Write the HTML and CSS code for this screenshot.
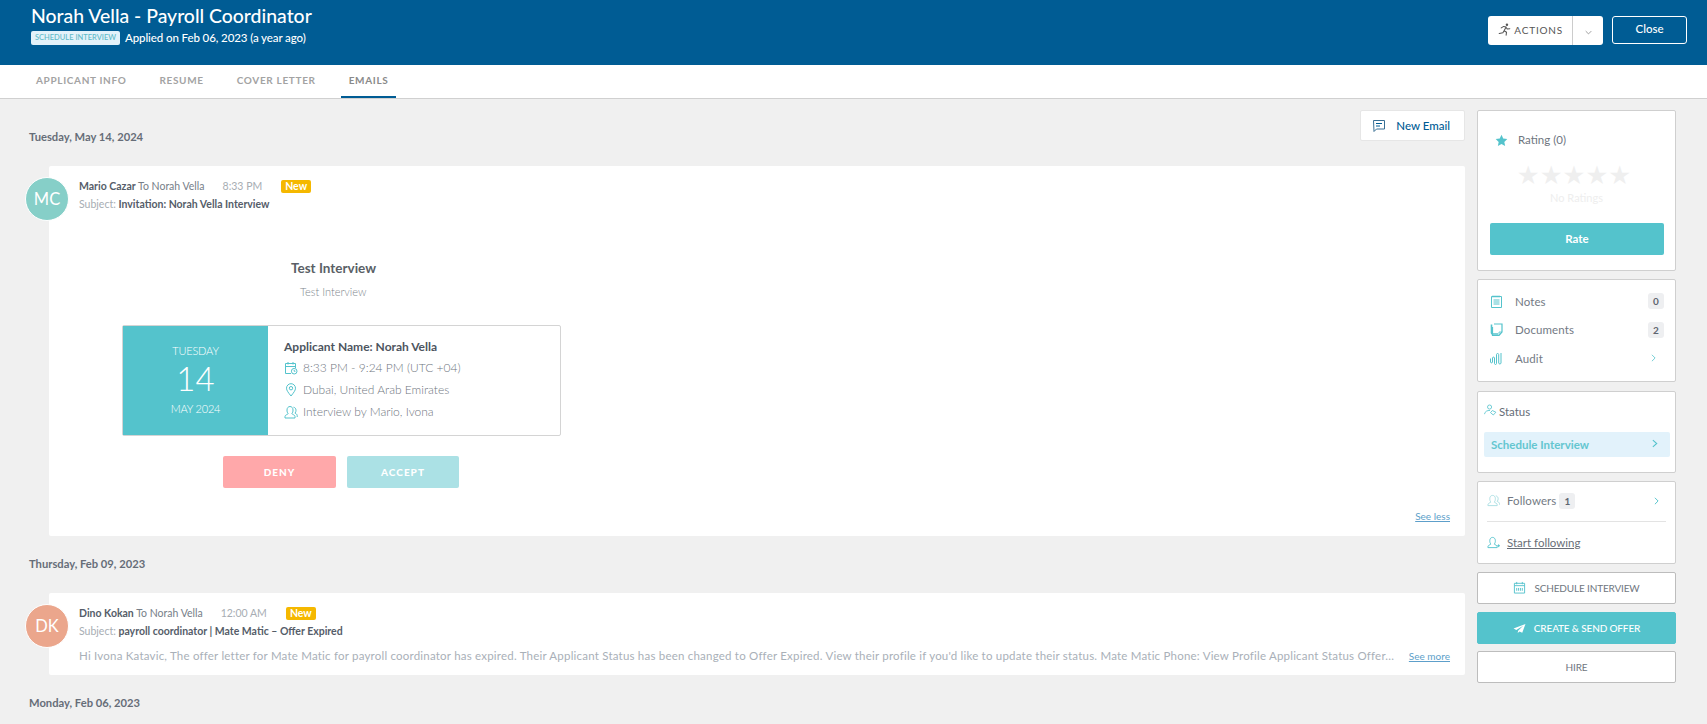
FILE: index.html
```html
<!DOCTYPE html>
<html lang="en">
<head>
<meta charset="utf-8">
<title>Norah Vella - Payroll Coordinator</title>
<link rel="stylesheet" href="styles.css">
</head>
<body>
<header class="topbar">
  <div class="topbar-text">
    <h1 class="title">Norah Vella - Payroll Coordinator</h1>
    <div class="subtitle"><span class="status-tag">SCHEDULE INTERVIEW</span><span>Applied on Feb 06, 2023 (a year ago)</span></div>
  </div>
  <div class="topbar-actions">
    <div class="actions-btn">
      <span class="actions-main">
        <svg class="ic-run" viewBox="0 0 16 16" fill="none" stroke="#555" stroke-width="1.300" stroke-linecap="round" stroke-linejoin="round"><circle cx="11" cy="2.200" r="1.500" fill="#555" stroke="none"/><path d="M4 6 7 4.200l3 .8-2.500 4.500 3 1.800-.5 3.700M7.500 9.500 6 12 1.500 13M10 5.500l1.500 2 3-.5"/></svg>
        ACTIONS
      </span>
      <span class="actions-caret"><svg viewBox="0 0 10 6" fill="none" stroke="#777" stroke-width="1"><path d="M1 1l4 4 4-4"/></svg></span>
    </div>
    <button class="close-btn">Close</button>
  </div>
</header>
<nav class="tabs">
  <a class="tab">APPLICANT INFO</a>
  <a class="tab">RESUME</a>
  <a class="tab">COVER LETTER</a>
  <a class="tab active">EMAILS</a>
</nav>
<main class="layout">
  <section class="emails">
    <div class="first-row">
      <div class="date">Tuesday, May 14, 2024</div>
      <button class="new-email">
        <svg class="ic-chat" viewBox="0 0 14 14" fill="none" stroke="#005c94" stroke-width="1"><path d="M1.500 1.500h11v8.500h-8l-2.500 2.500z" stroke="#3a6f94"/><path d="M4 4.500h6M4 7h4"/></svg>
        New Email
      </button>
    </div>
    <article class="email-card open">
      <div class="avatar teal-avatar">MC</div>
      <div class="meta"><b>Mario Cazar</b> To Norah Vella<span class="time">8:33 PM</span><span class="new-tag">New</span></div>
      <div class="subject">Subject: <b>Invitation: Norah Vella Interview</b></div>
      <div class="invite">
        <div class="invite-title">Test Interview</div>
        <div class="invite-sub">Test Interview</div>
        <div class="invite-box">
          <div class="invite-date">
            <div class="dow">TUESDAY</div>
            <div class="dom">14</div>
            <div class="my">MAY 2024</div>
          </div>
          <div class="invite-info">
            <div class="applicant">Applicant Name: Norah Vella</div>
            <div class="info-row"><svg class="ic-info" viewBox="0 0 14 14" fill="none" stroke="#54c3cc" stroke-width="1"><path d="M7 12.500H1.500V2.500h10v4.500M1.500 5.500h10M4 1v2.500M9 1v2.500"/><circle cx="10.200" cy="10.200" r="2.800"/><path d="M10.200 8.800v1.500h1.200"/></svg>8:33 PM - 9:24 PM (UTC +04)</div>
            <div class="info-row"><svg class="ic-info" viewBox="0 0 14 14" fill="none" stroke="#54c3cc" stroke-width="1"><path d="M7 13C4.500 9.800 2.500 7.500 2.500 5.200a4.500 4.500 0 0 1 9 0C11.500 7.500 9.500 9.800 7 13z"/><circle cx="7" cy="5.200" r="1.700"/></svg>Dubai, United Arab Emirates</div>
            <div class="info-row"><svg class="ic-info" viewBox="0 0 14 14" fill="none" stroke="#54c3cc" stroke-width="1"><path d="M1 13v-1.500c0-1.500 2.500-2 3.200-2.800C3.200 7.500 3 6.500 3 5c0-2 1.200-3.500 3-3.500S9 3 9 5c0 1.500-.2 2.500-1.200 3.700.7.800 3.200 1.300 3.200 2.800V13z"/><path d="M9.500 2.200c1.500.2 2.500 1.500 2.500 3 0 1-.2 2-1 3 .8.500 2.200 1 2.200 2.300V12"/></svg>Interview by Mario, Ivona</div>
          </div>
        </div>
        <div class="invite-btns">
          <button class="deny">DENY</button>
          <button class="accept">ACCEPT</button>
        </div>
      </div>
      <div class="see-less-row"><a class="see-link">See less</a></div>
    </article>
    <div class="date date-mid">Thursday, Feb 09, 2023</div>
    <article class="email-card">
      <div class="avatar orange-avatar">DK</div>
      <div class="meta"><b>Dino Kokan</b> To Norah Vella<span class="time">12:00 AM</span><span class="new-tag">New</span></div>
      <div class="subject">Subject: <b>payroll coordinator | Mate Matic – Offer Expired</b></div>
      <div class="preview-row">
        <div class="preview">Hi Ivona Katavic, The offer letter for Mate Matic for payroll coordinator has expired. Their Applicant Status has been changed to Offer Expired. View their profile if you'd like to update their status. Mate Matic Phone: View Profile Applicant Status Offer...</div>
        <a class="see-link see-more">See more</a>
      </div>
    </article>
    <div class="date date-last">Monday, Feb 06, 2023</div>
  </section>
  <aside class="sidebar">
    <div class="panel rating">
      <div class="rating-head">
        <svg class="ic-star" viewBox="0 0 24 24" fill="#54c3cc"><path d="M12 1.500l3.200 7 7.500.9-5.500 5.200 1.500 7.500-6.700-3.800-6.700 3.800 1.500-7.500L1.300 9.400l7.500-.9z"/></svg>
        <span>Rating (0)</span>
      </div>
      <div class="stars" aria-hidden="true">★★★★★</div>
      <div class="no-ratings">No Ratings</div>
      <button class="rate-btn">Rate</button>
    </div>
    <div class="panel links">
      <div class="link-row">
        <svg class="ic-side" viewBox="0 0 13 13" fill="none" stroke="#54c3cc" stroke-width="1"><path d="M1.500 1.500h10v11h-10zM3 .5v2M5 .5v2M7 .5v2M9 .5v2M3.500 5h6M3.500 7h6M3.500 9h6"/></svg>
        <span class="link-label">Notes</span><span class="count">0</span>
      </div>
      <div class="link-row">
        <svg class="ic-side" viewBox="0 0 13 13" fill="none" stroke="#54c3cc" stroke-width="1.200"><path d="M4 1h8v8l-3 3.500H2.500V4"/><path d="M1.500 1.500v8.500c0 .8.500 1 1 1H8" stroke-width="1.600"/><path d="M9 12V9h3" stroke-width=".8"/></svg>
        <span class="link-label">Documents</span><span class="count">2</span>
      </div>
      <div class="link-row">
        <svg class="ic-side" viewBox="0 0 13 13" fill="none" stroke="#54c3cc" stroke-width="1"><path d="M.5 6.500v3.500c0 1.200 2 1.200 2 0V6c0-1.200 2-1.200 2 0v5.500c0 1.300 2 1.300 2 0V2.500c0-1.300 2.200-1.300 2.200 0v8.500c0 1.300 2.300 1.300 2.300 0V1"/></svg>
        <span class="link-label">Audit</span>
        <svg class="chev" viewBox="0 0 6 10" fill="none" stroke="#54c3cc" stroke-width="1"><path d="M1 1l4 4-4 4"/></svg>
      </div>
    </div>
    <div class="panel status">
      <div class="status-head">
        <svg class="ic-status" viewBox="0 0 14 12" fill="none" stroke="#54c3cc" stroke-width=".9"><circle cx="6" cy="2.800" r="2.200"/><path d="M.5 10.500C1 7.500 3.500 6.300 6.500 6.500"/><path d="M7 8.800l2-2.200 3.800 1.800-2.800 3z"/></svg>
        <span>Status</span>
      </div>
      <div class="status-value"><span>Schedule Interview</span><svg class="status-chev" viewBox="0 0 7 10" fill="none" stroke="#54c3cc" stroke-width="1.300"><path d="M1 1l4.500 4L1 9"/></svg></div>
    </div>
    <div class="panel followers">
      <div class="follow-row">
        <svg class="ic-side" viewBox="0 0 14 14" fill="none" stroke="#a9dde2" stroke-width="1"><path d="M1 12.500v-1c0-1.500 2.500-2 3.200-2.800C3.200 7.500 3 6.500 3 5c0-2 1.200-3.500 3-3.500S9 3 9 5c0 1.500-.2 2.500-1.200 3.700.7.800 3.200 1.300 3.200 2.800v1z"/><path d="M9.500 2c1.500.2 2.500 1.500 2.500 3 0 1-.2 2-1 3 .8.500 2.500 1 2.500 2.500v1"/></svg>
        <span class="follow-label">Followers</span><span class="count inline">1</span>
        <svg class="chev follow-chev" viewBox="0 0 6 10" fill="none" stroke="#54c3cc" stroke-width="1.200"><path d="M1 1l4 4-4 4"/></svg>
      </div>
      <div class="follow-row start">
        <svg class="ic-side" viewBox="0 0 14 14" fill="none" stroke="#54c3cc" stroke-width="1"><path d="M1 12.500v-1c0-1.500 2.500-2 3.200-2.800C3.200 7.500 3 6.500 3 5c0-2 1.200-3.500 3-3.500S9 3 9 5c0 1.500-.2 2.500-1.200 3.700.7.800 3.200 1.300 3.200 2.800v1zM11 10.500h3M12.500 9v3"/></svg>
        <a class="start-link">Start following</a>
      </div>
    </div>
    <button class="side-btn">
      <svg class="ic-cal" viewBox="0 0 14 14" fill="none" stroke="#54c3cc" stroke-width="1"><path d="M1.500 2.500h11v10.500h-11zM1.500 5h11M4 1v2.500M10 1v2.500M4 7.500v3M6 7.500v3M8 7.500v3M10 7.500v3"/></svg>
      SCHEDULE INTERVIEW
    </button>
    <button class="side-btn primary">
      <svg class="ic-plane" viewBox="0 0 14 12" fill="#fff"><path d="M13.500 1 .5 6l3 1.500L11 3 5.500 8.500 5 11l2-1.800 3 1.300z"/></svg>
      CREATE &amp; SEND OFFER
    </button>
    <button class="side-btn hire">HIRE</button>
  </aside>
</main>
</body>
</html>
```

FILE: styles.css
```css
* { box-sizing: border-box; }
html, body { margin: 0; height: 100%; overflow: hidden; }
body { background: #f0f0f0; font-family: Lato, "Liberation Sans", sans-serif; color: #5b6470; }
button { font-family: inherit; cursor: pointer; }

.topbar { height: 65px; background: #005c94; color: #fff; display: flex; justify-content: space-between; padding: 0 20px 0 31px; }
.title { margin: 4px 0 0; font-size: 19.400px; line-height: 24px; font-weight: 500; }
.subtitle { display: flex; align-items: center; gap: 5px; margin-top: 3px; font-size: 11.500px; font-weight: 500; letter-spacing: -.1px; line-height: 14px; }
.status-tag { width: 89px; text-align: center; background: #e3f2fa; color: #5fbac8; font-size: 7.500px; letter-spacing: 0; line-height: 14px; border-radius: 2px; }
.topbar-actions { display: flex; align-items: flex-start; gap: 9px; padding-top: 16px; }
.actions-btn { width: 115px; height: 29px; background: #fff; border-radius: 3px; display: flex; align-items: center; color: #555; font-size: 10px; letter-spacing: .8px; }
.actions-main { width: 85px; height: 100%; border-right: 1px solid #ccc; display: flex; align-items: center; justify-content: flex-end; gap: 3px; padding-right: 9px; padding-bottom: 2px; }
.ic-run { width: 13px; height: 13px; }
.actions-caret { flex: 1; display: flex; justify-content: center; padding-top: 4px; }
.actions-caret svg { width: 7px; height: 5px; }
.close-btn { width: 75px; height: 28px; background: transparent; border: 1px solid #fff; border-radius: 3px; color: #fff; font-size: 11.500px; font-weight: 500; padding: 0 0 3px; }

.tabs { height: 34px; background: #fff; border-bottom: 1px solid #d0d0d0; display: flex; padding-left: 28px; }
.tab { height: 33px; padding: 0 8px; margin-right: 17px; font-size: 10px; font-weight: 700; letter-spacing: .66px; line-height: 30px; color: #a3a3a3; }
.tab.active { color: #8a8a8a; border-bottom: 2px solid #005c94; }

.layout { display: flex; align-items: flex-start; padding-top: 11px; }
.emails { width: 1465px; flex: none; padding-left: 29px; }
.first-row { display: flex; justify-content: space-between; align-items: flex-end; height: 31px; }
.first-row .date { margin-bottom: -3px; }
.date { font-size: 11.200px; font-weight: 700; line-height: 14px; color: #666d78; }
.new-email { width: 105px; height: 31px; background: #fff; border: 1px solid #e6e6e6; border-radius: 2px; color: #005c94; font-size: 11.500px; font-weight: 500; display: flex; align-items: center; justify-content: flex-end; gap: 10px; padding: 0 14px 0 0; }
.ic-chat { width: 14px; height: 14px; }

.email-card { position: relative; margin: 25px 0 0 20px; background: #fff; border-radius: 2px; padding: 13px 15px 0 30px; }
.email-card.open { height: 370px; }
.email-card:not(.open) { height: 82px; margin-top: 22px; }
.avatar { position: absolute; left: -24px; top: 11px; width: 44px; height: 44px; border-radius: 50%; border: 1px solid #fff; color: #fff; font-size: 16.500px; display: flex; align-items: center; justify-content: center; }
.teal-avatar { background: #86cfc8; }
.orange-avatar { background: #eba68c; }
.meta { font-size: 10.500px; line-height: 14px; color: #767e88; white-space: nowrap; }
.meta b { font-weight: 700; color: #555d69; }
.time { color: #a7adb3; margin-left: 18px; }
.new-tag { background: #f5b800; color: #fff; font-size: 10.500px; font-weight: 700; line-height: 13px; display: inline-block; padding: 0 4px; border-radius: 2px; margin-left: 19px; }
.subject { font-size: 10.500px; line-height: 14px; margin-top: 4px; color: #a7adb3; }
.subject b { font-weight: 700; color: #555d69; }

.invite { width: 439px; margin: 48px 0 0 43px; }
.invite-title { font-size: 13.500px; font-weight: 700; line-height: 18px; color: #5a5f66; padding-left: 169px; }
.invite-sub { font-size: 11px; font-weight: 300; line-height: 14px; color: #7e858c; padding-left: 178px; margin-top: 8px; }
.invite-box { display: flex; height: 111px; margin-top: 26px; border: 1px solid #d4d4d4; border-radius: 2px; background: #fff; }
.invite-date { width: 145px; background: #54c3cc; color: #fff; text-align: center; font-weight: 300; padding-top: 18px; }
.dow, .my { font-size: 11px; line-height: 14px; letter-spacing: -.2px; }
.dom { font-size: 33px; line-height: 34px; margin: 3px 0 7px; font-weight: 300; }
.invite-info { padding: 13px 0 0 16px; }
.applicant { font-size: 12px; font-weight: 700; line-height: 16px; color: #4d5560; margin-bottom: 2px; }
.info-row { display: flex; align-items: center; gap: 5px; font-size: 12px; font-weight: 300; line-height: 22px; color: #6f7680; }
.ic-info { width: 14px; height: 14px; }
.invite-btns { display: flex; gap: 11px; margin: 20px 0 0 101px; }
.deny, .accept { width: 113px; height: 32px; border: 0; border-radius: 2px; color: #fff; font-size: 10px; font-weight: 900; letter-spacing: 1px; }
.deny { background: #ffa8aa; }
.accept { background: #abe1e5; width: 112px; }
.see-less-row { display: flex; justify-content: flex-end; margin-top: 22px; }
.see-link { font-size: 10px; line-height: 13px; color: #5d9fca; text-decoration: underline; white-space: nowrap; }
.preview-row { display: flex; align-items: center; gap: 15px; margin-top: 10px; }
.preview { flex: 1; min-width: 0; font-size: 11.500px; line-height: 16px; color: #a9b0b8; white-space: nowrap; overflow: hidden; letter-spacing: .21px; }
.date-mid { margin-top: 21px; }
.date-last { margin-top: 21px; }

.sidebar { width: 199px; flex: none; margin-left: 12px; display: flex; flex-direction: column; }
.panel { background: #fff; border: 1px solid #cfcfcf; border-radius: 2px; margin-bottom: 8px; }
.rating { height: 161px; padding: 19px 12px 0; }
.rating-head { display: flex; align-items: center; gap: 10px; padding-left: 5px; font-size: 11.500px; line-height: 20px; color: #6f7680; }
.ic-star { width: 13px; height: 13px; }
.stars { text-align: center; font-size: 25.500px; line-height: 30px; color: #efefef; margin-top: 10px; padding-right: 5px; font-family: "DejaVu Sans", sans-serif; }
.no-ratings { text-align: center; font-size: 11px; line-height: 14px; color: #eeeeee; margin-top: 1px; }
.rate-btn { display: block; width: 174px; height: 32px; margin-top: 18px; background: #54c3cc; border: 0; border-radius: 2px; color: #fff; font-size: 11.500px; font-weight: 700; padding: 0 0 2px; }

.links { height: 103px; margin-bottom: 9px; padding: 7px 11px 0 12px; }
.link-row { display: flex; align-items: center; height: 28.500px; font-size: 11.500px; color: #737a84; }
.ic-side { width: 13px; height: 13px; flex: none; }
.link-label { flex: 1; margin-left: 12px; letter-spacing: .1px; }
.count { background: #eeeff1; color: #5f6670; font-size: 10px; font-weight: 700; width: 16px; height: 16px; line-height: 16px; text-align: center; border-radius: 3px; }
.chev { width: 5px; height: 8px; margin-right: 8px; flex: none; }

.status { height: 82px; padding: 0 5px 0 6px; }
.status-head { display: flex; align-items: center; height: 38px; margin-bottom: 2px; font-size: 11.500px; color: #666d78; }
.ic-status { width: 13px; height: 12px; margin-right: 2px; margin-bottom: 3px; }
.status-value { height: 25px; background: #e2f2fb; border-radius: 2px; display: flex; justify-content: space-between; align-items: center; padding: 0 12px 0 7px; font-size: 11.500px; font-weight: 700; color: #64c6d0; }
.status-chev { width: 6px; height: 9px; margin-top: -2px; }

.followers { height: 83px; padding: 0 9px; }
.follow-row { display: flex; align-items: center; height: 40px; font-size: 11.500px; color: #737a84; border-bottom: 1px solid #e3e3e3; padding-bottom: 2px; }
.follow-label { margin-left: 7px; letter-spacing: .1px; }
.count.inline { margin-left: 3px; }
.follow-chev { margin-left: auto; margin-right: 7px; }
.follow-row.start { border-bottom: 0; height: 40px; padding-bottom: 0; }
.start-link { margin-left: 7px; color: #6a6f78; text-decoration: underline; }

.side-btn { height: 32px; background: #fff; border: 1px solid #bdbdbd; border-radius: 2px; margin-bottom: 8px; font-size: 10px; letter-spacing: -.15px; color: #6f7680; display: flex; align-items: center; justify-content: center; gap: 8px; padding: 0; }
.side-btn.primary { background: #54c3cc; border-color: #54c3cc; color: #fff; font-weight: 500; margin-bottom: 7px; }
.ic-cal { width: 13px; height: 13px; margin-bottom: 2px; }
.ic-plane { width: 13px; height: 11px; }
```
